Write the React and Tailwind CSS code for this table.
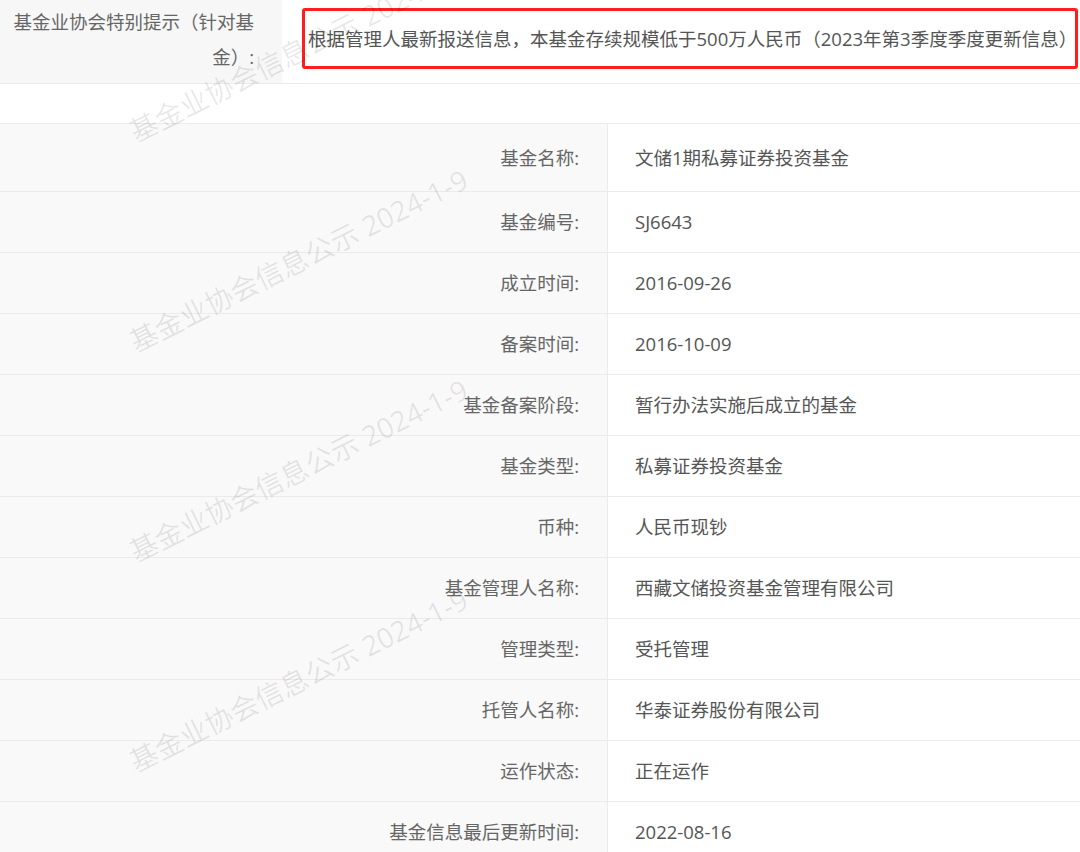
import React from "react";

const rows = [
  ["基金名称:", "文储1期私募证券投资基金"],
  ["基金编号:", "SJ6643"],
  ["成立时间:", "2016-09-26"],
  ["备案时间:", "2016-10-09"],
  ["基金备案阶段:", "暂行办法实施后成立的基金"],
  ["基金类型:", "私募证券投资基金"],
  ["币种:", "人民币现钞"],
  ["基金管理人名称:", "西藏文储投资基金管理有限公司"],
  ["管理类型:", "受托管理"],
  ["托管人名称:", "华泰证券股份有限公司"],
  ["运作状态:", "正在运作"],
  ["基金信息最后更新时间:", "2022-08-16"],
];

const wmTops = [119, 329, 539, 749];

export default function App() {
  return (
    <div
      className="relative w-[1080px] h-[852px] overflow-hidden bg-white text-[18.5px]"
      style={{ fontFamily: '"Open Sans", "Noto Sans CJK SC", sans-serif' }}
    >
      {/* top notice row */}
      <div className="flex h-[84px] border-b border-[#ebebeb]">
        <div className="w-[282px] shrink-0 bg-[#f7f7f7] pr-[28px] pt-[4px] text-right leading-[35px] text-[#666] whitespace-nowrap">
          基金业协会特别提示（针对基
          <br />
          金）:
        </div>
        <div className="flex-1 pl-[20px] pt-[8px]">
          <div className="flex h-[61px] w-[776px] items-center rounded-[3px] border-[3px] border-[#ff1e1e] pl-[3px] text-[#555] whitespace-nowrap">
            根据管理人最新报送信息，本基金存续规模低于500万人民币（2023年第3季度季度更新信息）
          </div>
        </div>
      </div>

      {/* gap */}
      <div className="h-[40px] border-b border-[#ebebeb]" />

      {/* detail table */}
      <div className="flex flex-col">
        {rows.map(([label, value], i) => (
          <div
            key={label}
            className={
              "flex border-b border-[#ebebeb] " + (i === 0 ? "h-[68px]" : "h-[61px]")
            }
          >
            <div className="flex w-[608px] shrink-0 items-center justify-end border-r border-[#ebebeb] bg-[#f9f9f9] pr-[28px] text-[#666] whitespace-nowrap">
              {label}
            </div>
            <div className="flex flex-1 items-center pl-[27px] text-[#555] whitespace-nowrap">
              {value}
            </div>
          </div>
        ))}
      </div>

      {/* watermarks */}
      {wmTops.map((t) => (
        <div
          key={t}
          className="pointer-events-none absolute left-[131px] h-[28px] origin-left -rotate-[26.4deg] whitespace-nowrap text-[28px] leading-[28px] text-[rgba(0,0,0,0.09)]"
          style={{ top: t }}
        >
          基金业协会信息公示 2024-1-9
        </div>
      ))}
    </div>
  );
}
